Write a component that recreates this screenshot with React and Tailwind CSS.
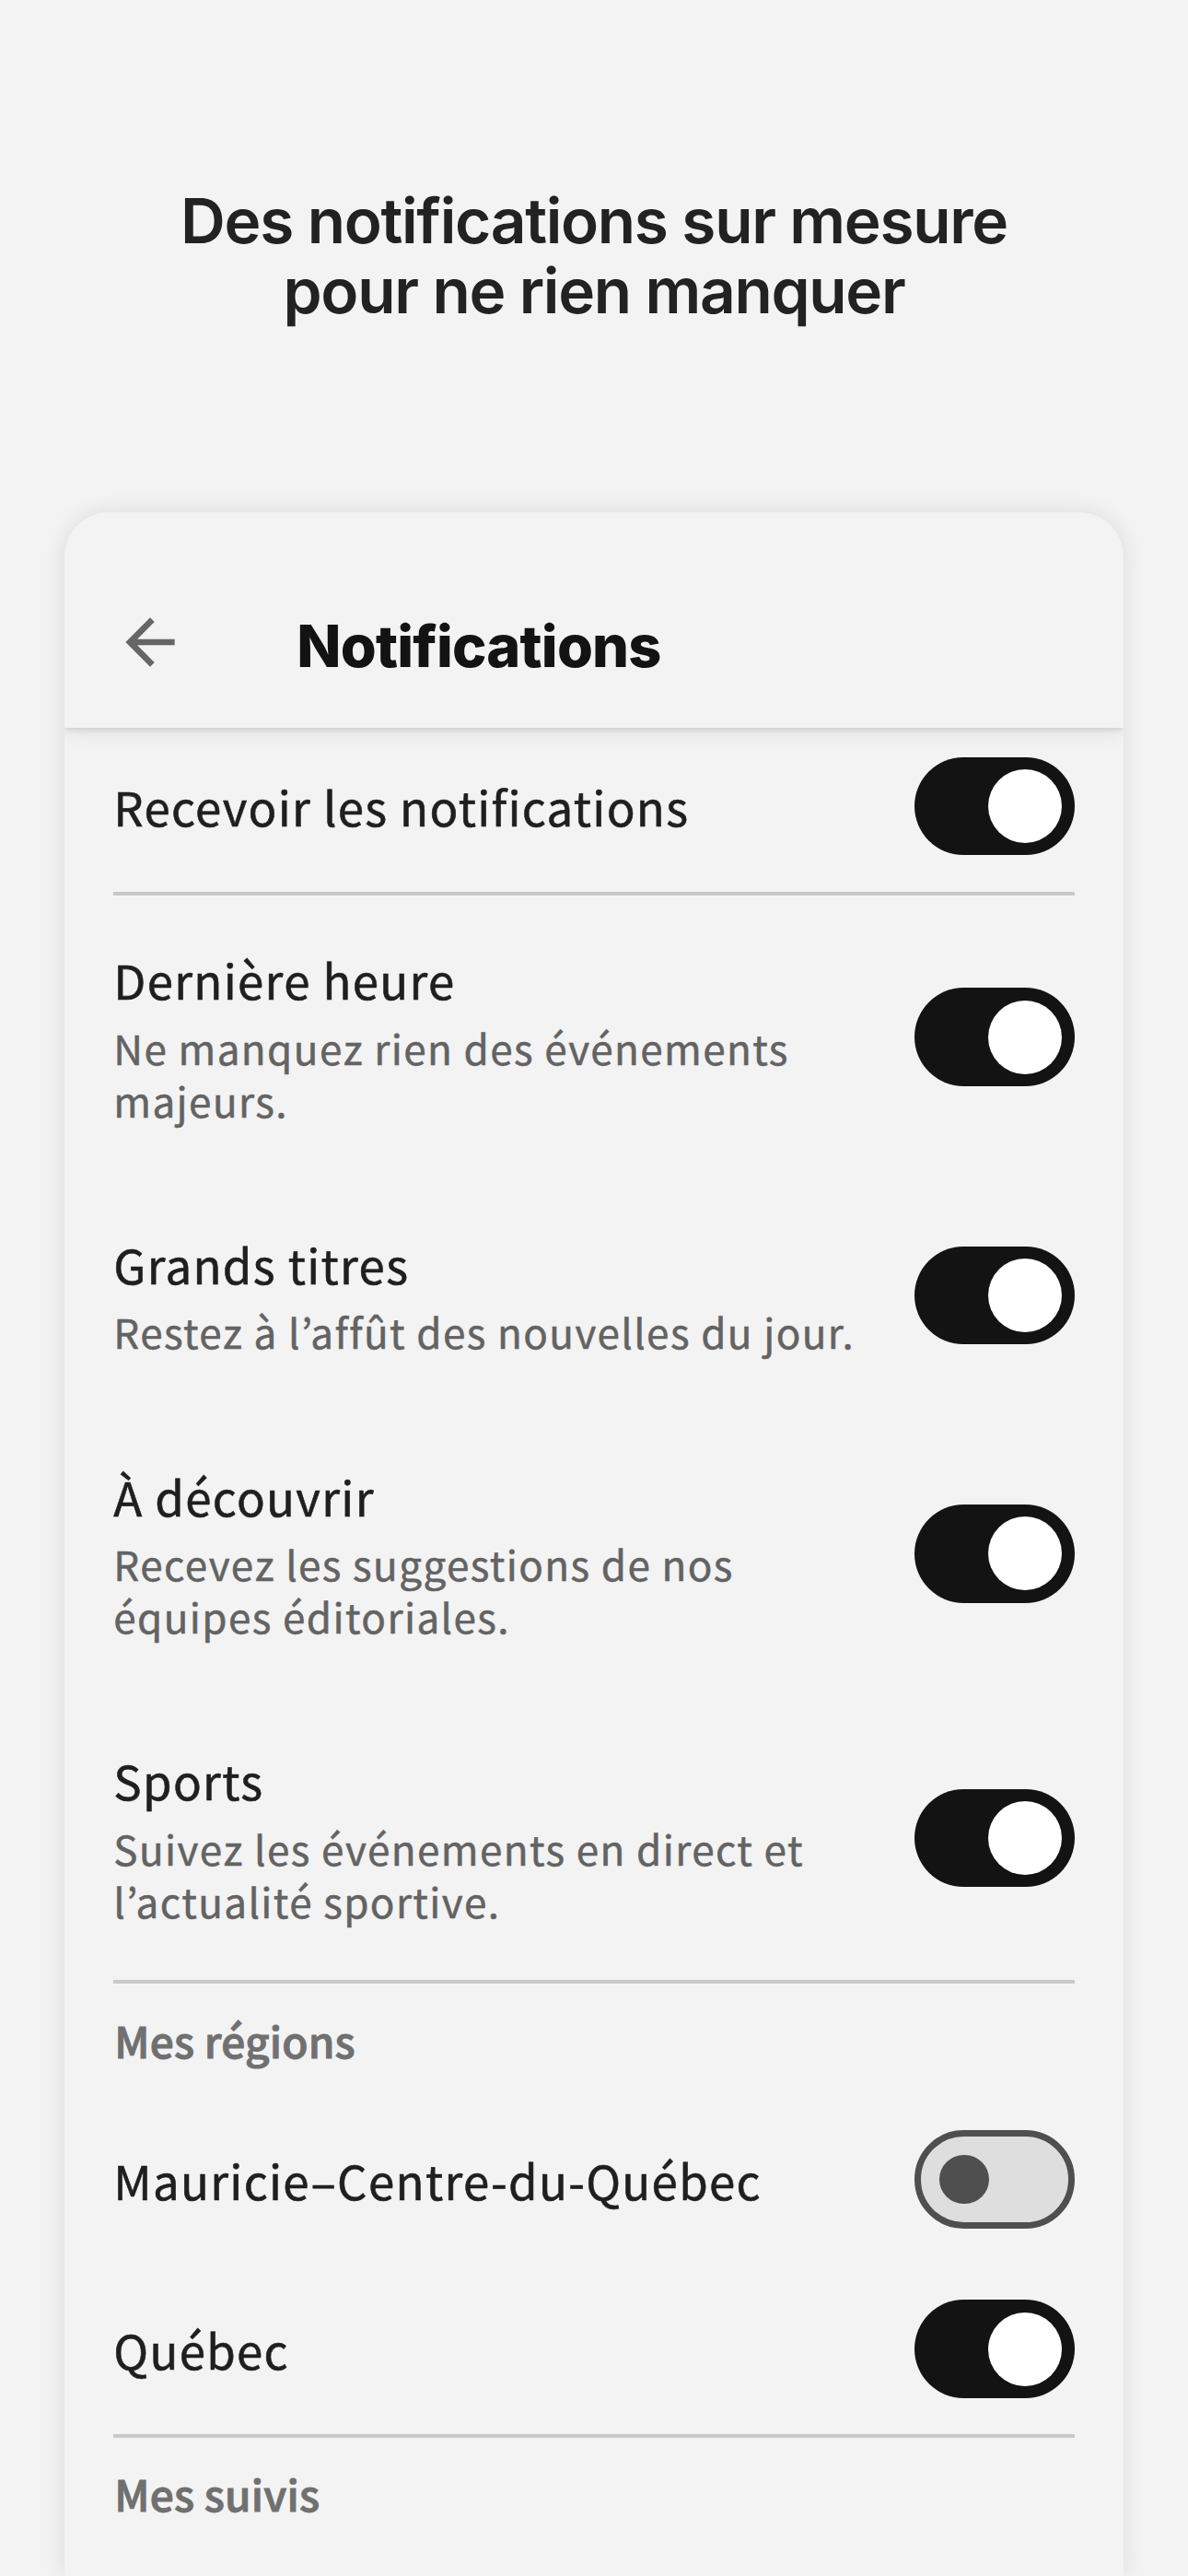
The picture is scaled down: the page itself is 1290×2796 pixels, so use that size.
const topics = [
  { title: 'Dernière heure', text: 'Ne manquez rien des événements majeurs.' },
  { title: 'Grands titres', text: 'Restez à l’affût des nouvelles du jour.' },
  { title: 'À découvrir', text: 'Recevez les suggestions de nos équipes éditoriales.' },
  { title: 'Sports', text: 'Suivez les événements en direct et l’actualité sportive.' },
]

const regions = [
  { name: 'Mauricie–Centre-du-Québec', on: false },
  { name: 'Québec', on: true },
]

function Toggle({ on = true }) {
  if (!on) {
    return (
      <div className="flex h-[106.7px] w-[173.3px] shrink-0 items-center rounded-full border-[7px] border-[#4f4f4f] bg-[#dedede] pl-5">
        <div className="h-[53.3px] w-[53.3px] rounded-full bg-[#4f4f4f]" />
      </div>
    )
  }
  return (
    <div className="flex h-[106.7px] w-[173.3px] shrink-0 items-center justify-end rounded-full bg-[#131313] pr-[13.3px]">
      <div className="h-20 w-20 rounded-full bg-white" />
    </div>
  )
}

function Label({ children }) {
  return (
    <div className="pt-px pb-px text-[51px] leading-[64px] tracking-[1.3px] text-[#1f1f1f] [-webkit-text-stroke:0.6px_#1f1f1f]">
      {children}
    </div>
  )
}

function Divider() {
  return <div className="-mb-[0.67px] h-1 bg-[#c9c9c9]" />
}

function SectionTitle({ children }) {
  return (
    <h2 className="h-[121px] pt-[33px] pl-px text-[46px] leading-[56px] font-medium tracking-[0.2px] text-[#707070] [-webkit-text-stroke:1px_#707070]">
      {children}
    </h2>
  )
}

function TopicRow({ title, text }) {
  return (
    <div className="flex items-center justify-between py-[57.8px]">
      <div className="w-[830px] pt-px">
        <Label>{title}</Label>
        <p className="mt-[12.7px] text-[44px] leading-[56.67px] tracking-[1.4px] text-[#636363] [-webkit-text-stroke:0.5px_#636363]">
          {text}
        </p>
      </div>
      <Toggle />
    </div>
  )
}

function BackArrow() {
  return (
    <svg viewBox="0 0 24 24" className="h-20 w-20 fill-[#666666]">
      <path d="M20 11H7.83l5.59-5.59L12 4l-8 8 8 8 1.41-1.41L7.83 13H20v-2z" />
    </svg>
  )
}

export default function App() {
  return (
    <div className="flex h-[2796px] w-[1290px] flex-col overflow-hidden bg-[#f3f3f3] font-['Noto_Sans_CJK_JP',sans-serif]">
      <h1 className="h-[556px] pt-[202px] text-center font-['Inter',sans-serif] text-[67.5px] leading-[76px] font-semibold tracking-[-1.3px] text-[#222222]">
        Des notifications sur mesure
        <br />
        pour ne rien manquer
      </h1>

      <div className="mx-[70px] flex-1 overflow-hidden rounded-t-[48px] bg-[#f3f3f3] shadow-[0_0_24px_rgba(0,0,0,0.1)]">
        <header className="flex h-[234px] items-center pt-[47px] pl-[53.3px] shadow-[0_2px_6px_rgba(0,0,0,0.12),0_8px_20px_rgba(0,0,0,0.06)]">
          <BackArrow />
          <span className="mt-[9px] ml-[119px] font-['Inter',sans-serif] text-[63px] leading-[76px] font-extrabold tracking-[-0.8px] text-[#131313]">
            Notifications
          </span>
        </header>

        <div className="px-[53.3px]">
          <div className="flex h-[178px] items-center justify-between pb-[8px]">
            <Label>Recevoir les notifications</Label>
            <Toggle />
          </div>
          <Divider />

          {topics.map(t => <TopicRow key={t.title} {...t} />)}
          <Divider />

          <SectionTitle>Mes régions</SectionTitle>
          {regions.map(r => (
            <div key={r.name} className="flex h-[184px] items-center justify-between">
              <Label>{r.name}</Label>
              <Toggle on={r.on} />
            </div>
          ))}
          <Divider />

          <SectionTitle>Mes suivis</SectionTitle>
        </div>
      </div>
    </div>
  )
}
